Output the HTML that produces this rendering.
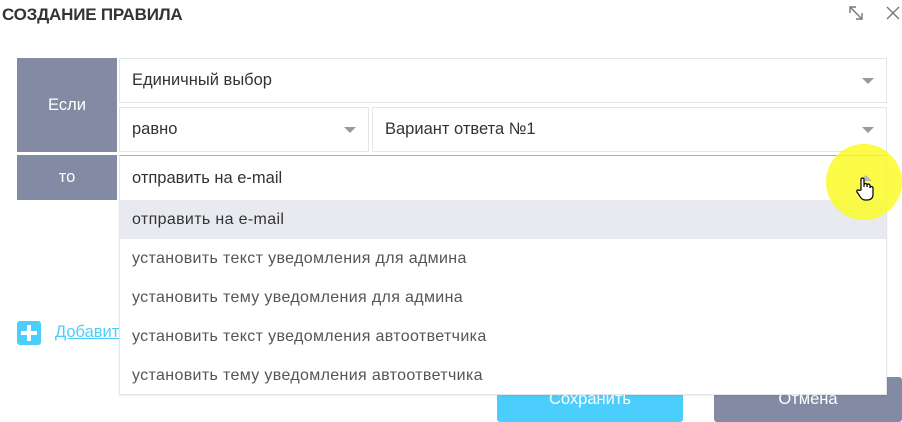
<!DOCTYPE html>
<html><head><meta charset="utf-8"><style>
body{margin:0;width:902px;height:422px;overflow:hidden;background:#fff;font-family:"Liberation Sans",sans-serif;position:relative;color:#333}
.a{position:absolute;box-sizing:border-box}
.lbl{background:#828ba3;color:#fff;font-size:16.5px;display:flex;align-items:center;justify-content:center}
.sel{border:1px solid #e3e6ea;background:#fff;font-size:16.5px;color:#333;padding-left:12px;display:flex;align-items:center}
.arr{position:absolute;right:12px;top:50%;margin-top:-3px;width:0;height:0;border-left:6px solid transparent;border-right:6px solid transparent;border-top:6px solid #999}
.it{position:absolute;left:0;right:0;height:39px;padding-left:12px;display:flex;align-items:center;font-size:16px;letter-spacing:0.35px;color:#555}
</style></head><body>
<div class="a" style="left:2px;top:5px;font-size:17px;font-weight:bold;color:#333;letter-spacing:-0.2px">СОЗДАНИЕ ПРАВИЛА</div>
<svg class="a" style="left:848px;top:5px" width="16" height="16" viewBox="0 0 16 16"><path d="M2 8V2h6M14 8v6H8M3 3l10 10" stroke="#777" stroke-width="1.4" fill="none"/></svg>
<svg class="a" style="left:885px;top:5px" width="16" height="16" viewBox="0 0 16 16"><path d="M2 2l12 12M14 2L2 14" stroke="#777" stroke-width="1.4"/></svg>

<div class="a lbl" style="left:17px;top:58px;width:100px;height:94px">Если</div>
<div class="a lbl" style="left:17px;top:155px;width:100px;height:45px">то</div>

<div class="a sel" style="left:119px;top:58px;width:768px;height:45px">Единичный выбор<span class="arr"></span></div>
<div class="a sel" style="left:119px;top:107px;width:250px;height:45px">равно<span class="arr"></span></div>
<div class="a sel" style="left:372px;top:107px;width:515px;height:45px">Вариант ответа №1<span class="arr"></span></div>
<div class="a sel" style="left:119px;top:155px;width:768px;height:46px;border-top-color:#aaa">отправить на e-mail</div>

<div class="a" style="left:17px;top:321px;width:24px;height:24px;background:#4ccefc;border-radius:3px"><div class="a" style="left:10px;top:4px;width:4px;height:16px;background:#fff"></div><div class="a" style="left:4px;top:10px;width:16px;height:4px;background:#fff"></div></div>
<div class="a" style="left:55px;top:323px;font-size:16.5px;color:#4ccefc;text-decoration:underline">Добавить</div>

<div class="a" style="left:497px;top:377px;width:186px;height:45px;background:#4ccefc;border-radius:3px;color:#fff;font-size:16.5px;display:flex;align-items:center;justify-content:center">Сохранить</div>
<div class="a" style="left:714px;top:377px;width:188px;height:45px;background:#828ba3;border-radius:3px;color:#fff;font-size:16.5px;display:flex;align-items:center;justify-content:center">Отмена</div>

<div class="a" style="left:119px;top:200px;width:768px;height:195px;background:#fff;border:1px solid #e3e6ea;border-top:none;box-shadow:0 1px 2px rgba(0,0,0,.08)">
<div class="it" style="top:0;background:#e8eaef;color:#333">отправить на e-mail</div>
<div class="it" style="top:39px">установить текст уведомления для админа</div>
<div class="it" style="top:78px">установить тему уведомления для админа</div>
<div class="it" style="top:117px">установить текст уведомления автоответчика</div>
<div class="it" style="top:156px">установить тему уведомления автоответчика</div>
</div>

<div class="a" style="left:826px;top:144px;width:76px;height:76px;border-radius:50%;background:rgba(250,250,40,.85)"></div>
<div class="a" style="left:860px;top:175px;width:0;height:0;border-left:6px solid transparent;border-right:6px solid transparent;border-bottom:6px solid #bbb"></div>
<svg class="a" style="left:855px;top:176px" width="22" height="26" viewBox="0 0 22 26"><path d="M6 14V3.5a1.5 1.5 0 0 1 3 0V11v-2a1.5 1.5 0 0 1 3 0v2-1.5a1.5 1.5 0 0 1 3 0V12a1.5 1.5 0 0 1 3 0v6c0 4-2 6-6 6h-2c-3 0-4-2-6-5l-2-3c-1-1.5 1-3 2.5-1.5z" fill="#fff" stroke="#000" stroke-width="1.2"/></svg>
</body></html>
